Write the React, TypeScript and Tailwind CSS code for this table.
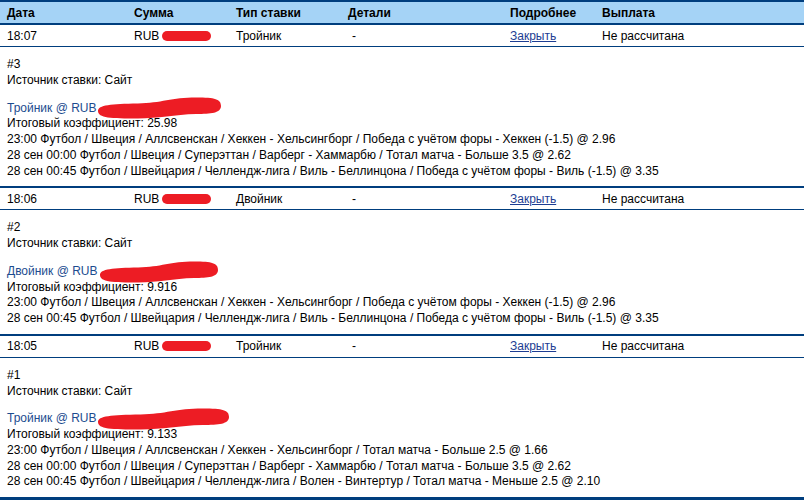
import React from "react";

interface Bet {
  time: string;
  type: string;
  num: number;
  coef: string;
  scribble: number;
  legs: string[];
}

const BETS: Bet[] = [
  {
    time: "18:07",
    type: "Тройник",
    num: 3,
    coef: "25.98",
    scribble: 124,
    legs: [
      "23:00 Футбол / Швеция / Аллсвенскан / Хеккен - Хельсингборг / Победа с учётом форы - Хеккен (-1.5) @ 2.96",
      "28 сен 00:00 Футбол / Швеция / Суперэттан / Варберг - Хаммарбю / Тотал матча - Больше 3.5 @ 2.62",
      "28 сен 00:45 Футбол / Швейцария / Челлендж-лига / Виль - Беллинцона / Победа с учётом форы - Виль (-1.5) @ 3.35",
    ],
  },
  {
    time: "18:06",
    type: "Двойник",
    num: 2,
    coef: "9.916",
    scribble: 119,
    legs: [
      "23:00 Футбол / Швеция / Аллсвенскан / Хеккен - Хельсингборг / Победа с учётом форы - Хеккен (-1.5) @ 2.96",
      "28 сен 00:45 Футбол / Швейцария / Челлендж-лига / Виль - Беллинцона / Победа с учётом форы - Виль (-1.5) @ 3.35",
    ],
  },
  {
    time: "18:05",
    type: "Тройник",
    num: 1,
    coef: "9.133",
    scribble: 132,
    legs: [
      "23:00 Футбол / Швеция / Аллсвенскан / Хеккен - Хельсингборг / Тотал матча - Больше 2.5 @ 1.66",
      "28 сен 00:00 Футбол / Швеция / Суперэттан / Варберг - Хаммарбю / Тотал матча - Больше 3.5 @ 2.62",
      "28 сен 00:45 Футбол / Швейцария / Челлендж-лига / Волен - Винтертур / Тотал матча - Меньше 2.5 @ 2.10",
    ],
  },
];

const COLS = "grid grid-cols-[127px_102px_112px_162px_92px_1fr] pl-[7px]";

/** Red marker blob hiding the stake amount in the details block. */
function Scribble({ width }: { width: number }) {
  const w = width;
  return (
    <span className="relative inline-block w-0 align-middle">
      <svg
        width={w}
        height={22}
        viewBox={`0 0 ${w} 22`}
        className="absolute left-[1px] top-[-11px]"
        aria-hidden="true"
      >
        <path
          d={`M1 14 C1 8 14 7 ${w * 0.33} 6.5 C${w * 0.52} 6 ${w * 0.6} 0.5 ${w * 0.8} 0.5 C${w - 6} 0.5 ${w} 2 ${w} 9 C${w} 16 ${w - 10} 17 ${w * 0.8} 17 C${w * 0.62} 17.5 ${w * 0.5} 21.5 ${w * 0.33} 21.5 C14 21.5 1 21 1 14 Z`}
          fill="#ed1c24"
        />
      </svg>
    </span>
  );
}

function BetBlock({ bet }: { bet: Bet }) {
  return (
    <div className="border-t-2 border-[#003e7e]">
      {/* summary row */}
      <div className={`${COLS} h-[22px] items-center border-b border-[#003e7e]`}>
        <span>{bet.time}</span>
        <span className="flex items-center">
          RUB
          <span className="ml-[3px] inline-block h-[10px] w-[49px] rounded-full bg-[#ed1c24]" />
        </span>
        <span>{bet.type}</span>
        <span className="pl-[4px]">-</span>
        <span className="text-[#1d3d92] underline">Закрыть</span>
        <span>Не рассчитана</span>
      </div>

      {/* details */}
      <div className="px-[7px] pt-[10px] pb-[7px] leading-[15.75px]">
        <div>#{bet.num}</div>
        <div>Источник ставки: Сайт</div>
        <div className="h-[12px]" />
        <div className="text-[#1c4c8f]">
          {bet.type} @ RUB
          <Scribble width={bet.scribble} />
        </div>
        <div>Итоговый коэффициент: {bet.coef}</div>
        {bet.legs.map((leg, i) => (
          <div key={i} className="whitespace-nowrap">
            {leg}
          </div>
        ))}
      </div>
    </div>
  );
}

export default function App() {
  return (
    <div className="h-[500px] w-[804px] overflow-hidden bg-white font-['Liberation_Sans',Arial,sans-serif] text-[12px] text-black">
      <div
        className={`${COLS} h-[25px] items-center border-y-2 border-[#003e7e] bg-[#a5d3f6] font-bold`}
      >
        <span>Дата</span>
        <span>Сумма</span>
        <span>Тип ставки</span>
        <span>Детали</span>
        <span>Подробнее</span>
        <span>Выплата</span>
      </div>
      <div className="-mt-[2px]">
        {BETS.map((bet) => (
          <BetBlock key={bet.num} bet={bet} />
        ))}
        <div className="border-t-[3px] border-[#003e7e]" />
      </div>
    </div>
  );
}
